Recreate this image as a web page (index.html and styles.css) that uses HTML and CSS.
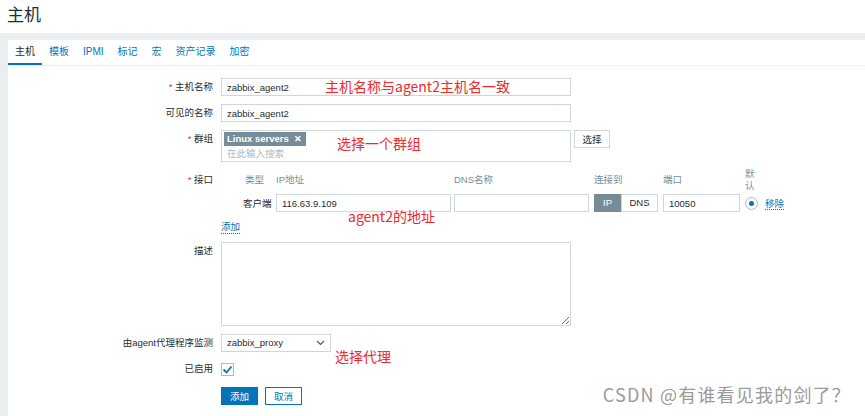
FILE: index.html
```html
<!DOCTYPE html>
<html lang="zh">
<head>
<meta charset="utf-8">
<title>主机</title>
<link rel="stylesheet" href="styles.css">
</head>
<body>
<header class="page-head"><h1>主机</h1></header>
<main class="wrap">
  <section class="card">
    <nav class="tabs">
      <span class="tab active">主机</span>
      <span class="tab">模板</span>
      <span class="tab">IPMI</span>
      <span class="tab">标记</span>
      <span class="tab">宏</span>
      <span class="tab">资产记录</span>
      <span class="tab">加密</span>
    </nav>
    <form class="form">
      <div class="row">
        <label class="lbl"><span class="req">*</span> 主机名称</label>
        <input class="inp w350" type="text" value="zabbix_agent2">
      </div>
      <div class="row">
        <label class="lbl">可见的名称</label>
        <input class="inp w350" type="text" value="zabbix_agent2">
      </div>
      <div class="row row-group">
        <label class="lbl"><span class="req">*</span> 群组</label>
        <div class="multi">
          <span class="tag">Linux servers <b class="x">✕</b></span>
          <span class="ph">在此输入搜索</span>
        </div>
        <button type="button" class="btn-grey">选择</button>
      </div>
      <div class="row row-iface">
        <label class="lbl lbl-iface"><span class="req">*</span> 接口</label>
        <div class="iface">
          <div class="ihead">
            <span class="c1">类型</span>
            <span class="c2">IP地址</span>
            <span class="c3">DNS名称</span>
            <span class="c4">连接到</span>
            <span class="c5">端口</span>
            <span class="c6">默认</span>
            <span class="c7"></span>
          </div>
          <div class="irow">
            <span class="c1 dark">客户端</span>
            <span class="c2"><input class="inp ip" type="text" value="116.63.9.109"></span>
            <span class="c3"><input class="inp dns" type="text" value=""></span>
            <span class="c4 toggle"><span class="tg on">IP</span><span class="tg">DNS</span></span>
            <span class="c5"><input class="inp port" type="text" value="10050"></span>
            <span class="c6"><span class="radio"></span></span>
            <span class="c7"><a class="link">移除</a></span>
          </div>
          <a class="link add">添加</a>
        </div>
      </div>
      <div class="row">
        <label class="lbl">描述</label>
        <textarea class="ta"></textarea>
      </div>
      <div class="row row-proxy">
        <label class="lbl">由agent代理程序监测</label>
        <div class="sel">zabbix_proxy
          <svg class="chev" width="9" height="6" viewBox="0 0 9 6"><path d="M1 1l3.5 3.5L8 1" fill="none" stroke="#555" stroke-width="1.2"/></svg>
        </div>
      </div>
      <div class="row row-check">
        <label class="lbl">已启用</label>
        <span class="cb"><svg width="11" height="9" viewBox="0 0 11 9"><path d="M1.5 4.5l3 3L9.5 1.5" fill="none" stroke="#0275b8" stroke-width="1.8"/></svg></span>
      </div>
      <div class="row row-btns">
        <span class="lbl"></span>
        <button type="button" class="btn-main">添加</button>
        <button type="button" class="btn-alt">取消</button>
      </div>
    </form>
  </section>
</main>
<div class="note n1">主机名称与agent2主机名一致</div>
<div class="note n2">选择一个群组</div>
<div class="note n3">agent2的地址</div>
<div class="note n4">选择代理</div>
<div class="wm">CSDN @有谁看见我的剑了？</div>
</body>
</html>
```
FILE: styles.css
```css
* { box-sizing: border-box; }
html, body { margin: 0; padding: 0; }
body {
  position: relative;
  width: 865px;
  height: 416px;
  overflow: hidden;
  background: #ffffff;
  font-family: "Liberation Sans", Arial, "Noto Sans CJK SC", sans-serif;
  font-size: 9.5px;
  color: #1f2c33;
}
.page-head { height: 33px; padding: 5px 7px 0; }
.page-head h1 {
  margin: 0;
  font-size: 17px;
  font-weight: normal;
  line-height: 22px;
  color: #1f2c33;
}
.wrap {
  background: #ebeef0;
  padding: 7px 0 0 8px;
  height: 383px;
}
.card { background: #ffffff; height: 100%; }
.tabs {
  display: flex;
  height: 26px;
  border-bottom: 1px solid #ebeef0;
  font-size: 10px;
}
.tab {
  height: 25px;
  line-height: 23px;
  padding: 0 7px;
  color: #0275b8;
  border-bottom: 2px solid transparent;
}
.tab.active { color: #1f2c33; border-bottom-color: #0275b8; }
.form { padding-top: 12px; }
.row { display: flex; align-items: flex-start; margin-bottom: 8px; }
.lbl {
  flex: 0 0 205px;
  width: 205px;
  margin-right: 8px;
  text-align: right;
  line-height: 18px;
  color: #1f2c33;
}
.req { color: #e33734; }
.inp {
  height: 18px;
  border: 1px solid #cfd7dc;
  background: #fff;
  font-family: inherit;
  font-size: 9.5px;
  color: #1f2c33;
  padding: 0 5px;
  outline: none;
  margin: 0;
}
.w350 { width: 350px; }
.row-group { margin-bottom: 6px; }
.multi {
  width: 350px;
  height: 32px;
  border: 1px solid #cfd7dc;
  padding: 1px 2px;
  display: flex;
  flex-direction: column;
  align-items: flex-start;
}
.tag {
  display: inline-block;
  height: 14px;
  line-height: 14px;
  padding: 0 4px 0 3px;
  background: #768d99;
  color: #fff;
  font-weight: bold;
  font-size: 9.5px;
}
.tag .x { margin-left: 3px; font-size: 9px; }
.ph { color: #acbbc2; line-height: 14px; margin-top: 1px; padding-left: 3px; }
.btn-grey {
  margin-left: 3px;
  width: 36px;
  height: 18px;
  border: 1px solid #cfd7dc;
  background: #fff;
  font-family: inherit;
  font-size: 9.5px;
  color: #1f2c33;
  padding: 0;
}
.row-iface { margin-bottom: 8px; }
.lbl-iface { line-height: 24px; }
.iface { display: flex; flex-direction: column; align-items: flex-start; }
.ihead, .irow {
  display: grid;
  grid-template-columns: 55px 178px 140px 69px 82px 20px auto;
  align-items: center;
}
.ihead { height: 24px; color: #768d99; line-height: 12px; margin-bottom: 2px; }
.ihead .c6 { width: 12px; }
.c1 { padding-left: 24px; }
.dark { color: #1f2c33; padding-left: 22px; }
.irow { height: 18px; }
.ip { width: 175px; }
.dns { width: 135px; }
.port { width: 77px; }
.toggle { display: flex; width: 64px; height: 18px; }
.tg {
  flex: 1;
  text-align: center;
  line-height: 16px;
  border: 1px solid #cfd7dc;
  color: #1f2c33;
}
.tg.on { flex: 0 0 27px; background: #768d99; border-color: #768d99; color: #fff; }
.radio {
  display: block;
  width: 13px;
  height: 13px;
  border: 1px solid #acbbc2;
  border-radius: 50%;
  position: relative;
  background: #fff;
}
.radio::after {
  content: "";
  position: absolute;
  left: 3px; top: 3px;
  width: 5px; height: 5px;
  border-radius: 50%;
  background: #0275b8;
}
.link {
  color: #0275b8;
  border-bottom: 1px dotted #0275b8;
  line-height: 13px;
  cursor: pointer;
}
.add { margin-top: 8px; }
.ta {
  width: 350px;
  height: 84px;
  border: 1px solid #cfd7dc;
  margin: 0;
  padding: 3px 5px;
  font-family: inherit;
  font-size: 9.5px;
  resize: both;
}
.row-proxy { margin-top: 4px; }
.sel {
  width: 110px;
  height: 18px;
  border: 1px solid #cfd7dc;
  line-height: 16px;
  padding: 0 5px;
  display: flex;
  justify-content: space-between;
  align-items: center;
}
.row-check { align-items: center; margin-bottom: 9px; }
.cb {
  width: 13px;
  height: 13px;
  border: 1px solid #acbbc2;
  display: flex;
  align-items: center;
  justify-content: center;
}
.btn-main, .btn-alt {
  width: 37px;
  height: 18px;
  padding: 0;
  font-family: inherit;
  font-size: 9.5px;
}
.btn-main { background: #0275b8; border: 1px solid #0275b8; color: #fff; }
.btn-alt { margin-left: 7px; background: #fff; border: 1px solid #0275b8; color: #0275b8; }
.note {
  position: absolute;
  font-family: "Noto Sans CJK SC", "Liberation Sans", sans-serif;
  font-size: 14px;
  line-height: 16px;
  color: #ee2a2a;
  white-space: nowrap;
}
.n1 { left: 325px; top: 78px; }
.n2 { left: 337px; top: 135px; }
.n3 { left: 348px; top: 208px; }
.n4 { left: 335px; top: 348px; }
.wm {
  position: absolute;
  right: 14px;
  top: 383px;
  font-family: "Noto Sans CJK SC", "Liberation Sans", sans-serif;
  font-size: 18px;
  line-height: 22px;
  letter-spacing: 1.2px;
  color: #9a9a9a;
  white-space: nowrap;
}
```
